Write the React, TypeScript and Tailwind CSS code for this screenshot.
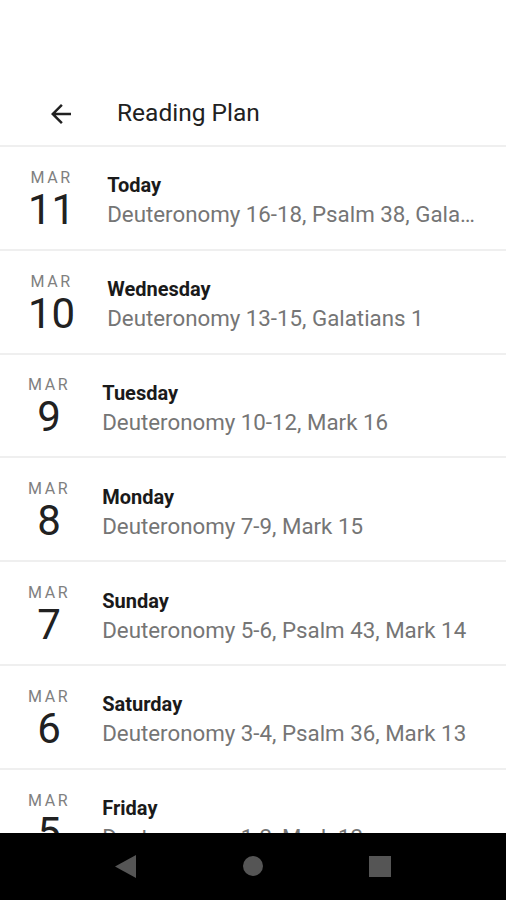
import React from "react";

const rows = [
  { m: "MAR", d: "11", t: "Today", s: "Deuteronomy 16-18, Psalm 38, Galatians 2" },
  { m: "MAR", d: "10", t: "Wednesday", s: "Deuteronomy 13-15, Galatians 1" },
  { m: "MAR", d: "9", t: "Tuesday", s: "Deuteronomy 10-12, Mark 16" },
  { m: "MAR", d: "8", t: "Monday", s: "Deuteronomy 7-9, Mark 15" },
  { m: "MAR", d: "7", t: "Sunday", s: "Deuteronomy 5-6, Psalm 43, Mark 14" },
  { m: "MAR", d: "6", t: "Saturday", s: "Deuteronomy 3-4, Psalm 36, Mark 13" },
  { m: "MAR", d: "5", t: "Friday", s: "Deuteronomy 1-2, Mark 12" },
  { m: "MAR", d: "4", t: "Thursday", s: "Numbers 34-36, Mark 11" },
];

export default function App() {
  return (
    <div
      className="w-[506px] h-[900px] bg-white flex flex-col overflow-hidden"
      style={{ fontFamily: "Roboto, 'Liberation Sans', sans-serif" }}
    >
      <div className="h-[80px] shrink-0" />
      <div className="h-[65px] shrink-0 flex items-center border-b-2 border-[#efefef] box-content">
        <div className="w-[30px] h-[30px] ml-[46px] mt-[2px]">
          <svg viewBox="0 0 24 24" width="30" height="30" fill="#212121">
            <path d="M20 11H7.83l5.59-5.59L12 4l-8 8 8 8 1.41-1.41L7.83 13H20v-2z" />
          </svg>
        </div>
        <div className="ml-[41px] mt-[2px] text-[24.5px] leading-none text-[#212121]">Reading Plan</div>
      </div>
      <div className="flex-1 overflow-hidden">
        {rows.map((r, i) => (
          <div
            key={i}
            className="h-[96.8px] box-content border-b-2 border-[#efefef] flex items-center pl-[28px] pt-[5px]"
          >
            <div className="flex flex-col items-center shrink-0">
              <div className="text-[16px] leading-[16px] tracking-[2.6px] text-[#808080]">{r.m}</div>
              <div className="text-[42px] leading-none text-[#212121] mt-[3px]">{r.d}</div>
            </div>
            <div className="ml-[32px] min-w-0 flex-1 pr-[28px] flex flex-col">
              <div className="text-[20px] leading-[26px] font-bold text-[#1a1a1a]">{r.t}</div>
              <div className="text-[22.3px] leading-[28px] mt-[2px] text-[#757575] truncate">{r.s}</div>
            </div>
          </div>
        ))}
      </div>
      <div className="h-[67px] shrink-0 bg-black flex items-center">
        <div className="relative w-full h-full">
          <svg className="absolute left-[115px] top-[22px]" width="22" height="23" viewBox="0 0 22 23">
            <polygon points="21,0 21,23 0,11.5" fill="#555555" />
          </svg>
          <div className="absolute left-[243px] top-[23px] w-[20px] h-[20px] rounded-full bg-[#555555]" />
          <div className="absolute left-[369px] top-[23px] w-[22px] h-[21px] bg-[#555555]" />
        </div>
      </div>
    </div>
  );
}
